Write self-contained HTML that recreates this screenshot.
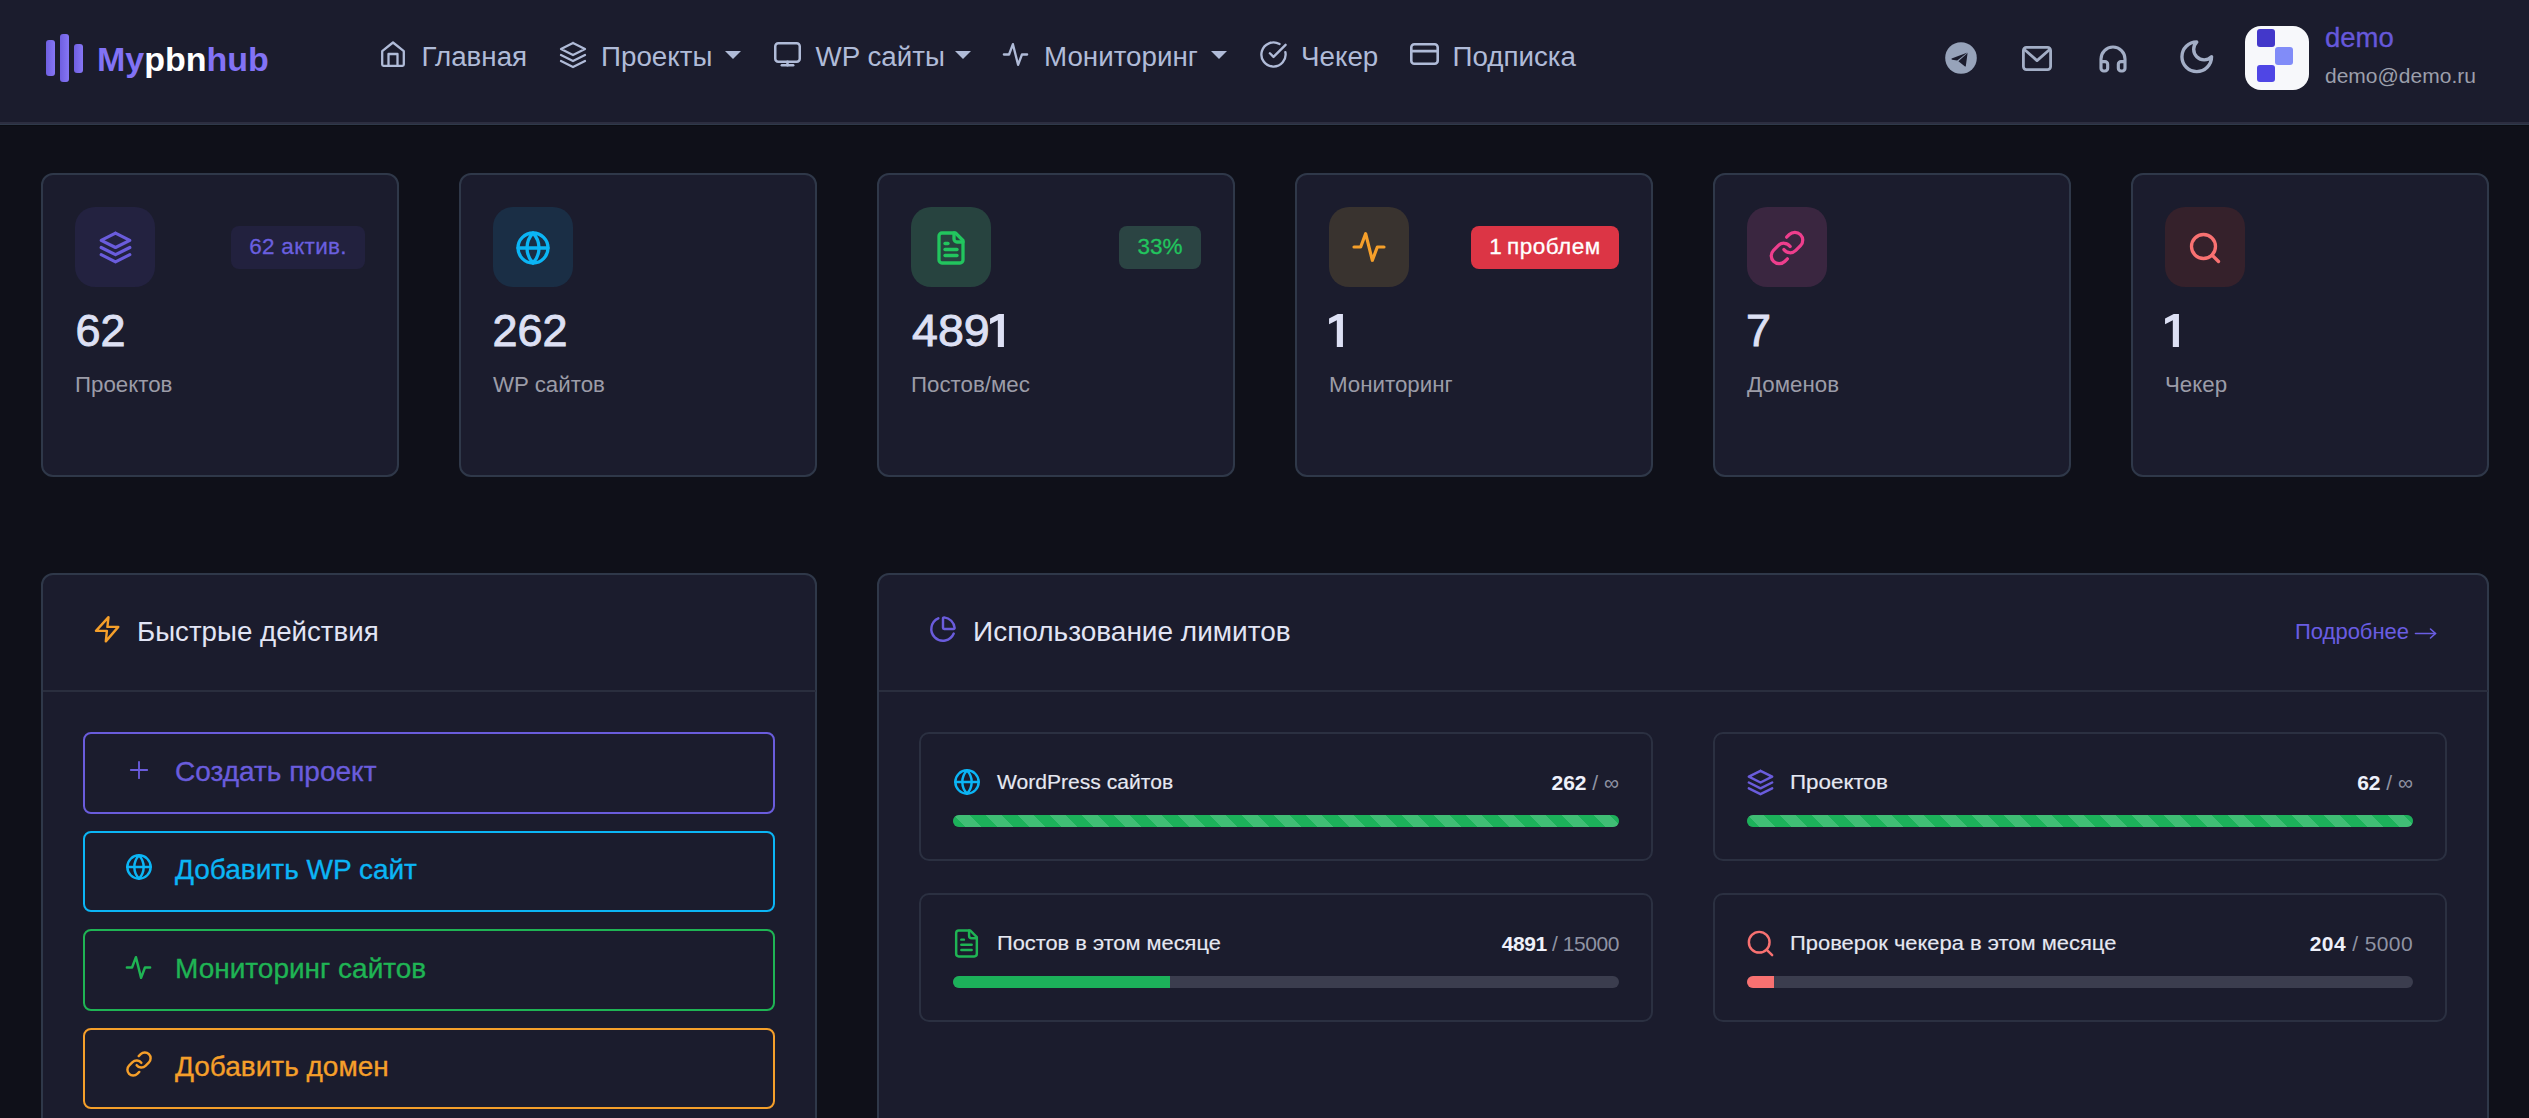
<!DOCTYPE html>
<html lang="ru">
<head>
<meta charset="utf-8">
<style>
*{box-sizing:border-box;margin:0;padding:0}
html,body{width:2529px;height:1118px;overflow:hidden}
body{background:#0f1019;font-family:"Liberation Sans",sans-serif;position:relative;color:#e0e4f5}
.abs{position:absolute}
.t{position:absolute;white-space:nowrap;line-height:1}
svg{position:absolute;overflow:visible}
.ic{fill:none;stroke-linecap:round;stroke-linejoin:round}
/* header */
#hdr{position:absolute;left:0;top:0;width:2529px;height:122px;background:#1b1c2d}
#hb1{position:absolute;left:0;top:122px;width:2529px;height:2px;background:#2c2e40}
#hb2{position:absolute;left:0;top:124px;width:2529px;height:1px;background:#2f394a}
#hb3{position:absolute;left:0;top:125px;width:2529px;height:1px;background:#0b0c12}
.nav{color:#b0bbd8;font-size:27.75px}
.nav-ic{stroke:#b0bbd8}
.caret{position:absolute;width:0;height:0;border-left:8px solid transparent;border-right:8px solid transparent;border-top:8px solid #b0bbd8}
/* cards */
.card{position:absolute;background:#1b1c2d;border:2px solid #2f3849;border-radius:12px}
.ibox{position:absolute;width:80px;height:80px;border-radius:20px}
.num{font-size:45px;font-weight:400;color:#dde0f4;-webkit-text-stroke:0.9px #dde0f4;transform-origin:left top}
.lbl{font-size:22.3px;color:#9c9ca8}
.badge{position:absolute;height:43px;border-radius:8px;font-size:22.5px;line-height:42px;text-align:center;-webkit-text-stroke:0.3px currentColor}
.btn{position:absolute;left:83px;width:692px;height:81.5px;border:2px solid;border-radius:8px}
.btxt{font-size:28px;-webkit-text-stroke:0.35px currentColor}
.lbox{position:absolute;width:734px;height:128.5px;border:2px solid #2b3041;border-radius:10px}
.ltxt{font-size:20px;color:#e6e8f2;-webkit-text-stroke:0.15px #e6e8f2;transform-origin:left top}
.lval{font-size:21px;color:#8f93a3;text-align:right}
.lval b{color:#eef0fa}
.bar{position:absolute;height:12px;border-radius:6px;background:#3b3d4e;overflow:hidden}
.fill{position:absolute;left:0;top:0;height:12px;background:#1cb15a}
.striped{background-color:#1cb15a;background-image:linear-gradient(45deg,rgba(255,255,255,.16) 25%,transparent 25%,transparent 50%,rgba(255,255,255,.16) 50%,rgba(255,255,255,.16) 75%,transparent 75%,transparent);background-size:32px 32px}
</style>
</head>
<body>
<!-- HEADER -->
<div id="hdr"></div><div id="hb1"></div><div id="hb2"></div><div id="hb3"></div>
<!-- logo -->
<div class="abs" style="left:45.5px;top:40px;width:9px;height:36px;border-radius:3px;background:linear-gradient(90deg,#6f5fe0,#8676f5)"></div>
<div class="abs" style="left:60px;top:34px;width:9px;height:48px;border-radius:3px;background:linear-gradient(90deg,#6f5fe0,#8676f5)"></div>
<div class="abs" style="left:74px;top:44px;width:9px;height:28.5px;border-radius:3px;background:linear-gradient(90deg,#6f5fe0,#8676f5)"></div>
<div class="t" style="left:97px;top:42.3px;font-size:34px;font-weight:700;color:#8272f5">My<span style="color:#fff">pbn</span>hub</div>

<!-- nav -->
<svg class="ic nav-ic" style="left:381px;top:41px" width="24" height="26" viewBox="0 0 24 26" stroke-width="2.3">
  <path d="M1.2 10.2 L12 1.5 L22.8 10.2 V23.6 a1.3 1.3 0 0 1 -1.3 1.3 H2.5 a1.3 1.3 0 0 1 -1.3 -1.3 Z"/>
  <path d="M7.5 24.9 V13 H16.5 V24.9"/>
</svg>
<div class="t nav" style="left:421.5px;top:42.7px">Главная</div>

<svg class="ic nav-ic" style="left:554.5px;top:37.3px" width="36" height="36" viewBox="0 0 24 24" stroke-width="1.5">
  <path d="M12 4l-8 4l8 4l8 -4l-8 -4"/><path d="M4 12l8 4l8 -4"/><path d="M4 16l8 4l8 -4"/>
</svg>
<div class="t nav" style="left:601px;top:42.7px">Проекты</div>
<div class="caret" style="left:725px;top:51px"></div>

<svg class="ic nav-ic" style="left:774px;top:41.8px" width="27" height="24.5" viewBox="0 0 27 24.5" stroke-width="2.5">
  <rect x="1.25" y="1.25" width="24.5" height="18.4" rx="3"/><path d="M13.5 19.7 V23.2"/><path d="M7.8 23.2 H19.2"/>
</svg>
<div class="t nav" style="left:815.5px;top:42.7px">WP сайты</div>
<div class="caret" style="left:955px;top:51px"></div>

<svg class="ic nav-ic" style="left:1000px;top:39px" width="31" height="31" viewBox="0 0 24 24" stroke-width="1.8">
  <path d="M3 12h4l3 -8l4 16l3 -8h4"/>
</svg>
<div class="t nav" style="left:1044px;top:42.7px">Мониторинг</div>
<div class="caret" style="left:1211px;top:51px"></div>

<svg class="ic nav-ic" style="left:1258.7px;top:39.7px" width="29" height="29" viewBox="0 0 24 24" stroke-width="1.95">
  <path d="M21.801 10A10 10 0 1 1 17 3.335"/><path d="m9 11 3 3L22 4"/>
</svg>
<div class="t nav" style="left:1301px;top:42.7px">Чекер</div>

<svg class="ic nav-ic" style="left:1410px;top:43.4px" width="29" height="22" viewBox="0 0 29 22" stroke-width="2.6">
  <rect x="1.3" y="1.3" width="26.4" height="19.4" rx="3"/><path d="M1.3 8.1 H27.7"/>
</svg>
<div class="t nav" style="left:1452.5px;top:42.7px">Подписка</div>

<!-- right header icons -->
<svg style="left:1945px;top:42px" width="32" height="32" viewBox="0 0 32 32">
  <circle cx="16" cy="16" r="15.8" fill="#97a3ba"/>
  <path d="M6.6 16.6 Q6.1 17.3 7.2 17.7 L12.2 18.4 L21.9 11.0 L22.6 10.4 Z" fill="#1b1c2d"/>
  <path d="M22.6 10.9 L20.8 24.3 Q20.5 24.8 20.0 24.4 L13.4 19.3 Z" fill="#1b1c2d"/>
</svg>
<svg class="ic" style="left:2022px;top:46px" width="30" height="25" viewBox="0 0 30 25" stroke="#a3aec6" stroke-width="2.8">
  <rect x="1.4" y="1.4" width="27.2" height="22.2" rx="3"/><path d="M3.2 4.2 L15 14.6 L26.8 4.2"/>
</svg>
<svg class="ic" style="left:2097px;top:43px" width="32" height="32" viewBox="0 0 24 24" stroke="#a3aec6" stroke-width="2.35">
  <path d="M3 14h3a2 2 0 0 1 2 2v3a2 2 0 0 1-2 2H5a2 2 0 0 1-2-2v-7a9 9 0 0 1 18 0v7a2 2 0 0 1-2 2h-1a2 2 0 0 1-2-2v-3a2 2 0 0 1 2-2h3"/>
</svg>
<svg class="ic" style="left:2177.4px;top:37.3px" width="39.5" height="39.5" viewBox="0 0 24 24" stroke="#a3aec6" stroke-width="2.05">
  <path d="M12 3a6 6 0 0 0 9 9 9 9 0 1 1-9-9Z"/>
</svg>
<div class="abs" style="left:2245px;top:26px;width:64px;height:64px;border-radius:16px;background:#f7f8fb"></div>
<div class="abs" style="left:2257px;top:29px;width:18px;height:18px;border-radius:3px;background:#4338ca"></div>
<div class="abs" style="left:2275px;top:47px;width:18px;height:18px;border-radius:3px;background:#818cf8"></div>
<div class="abs" style="left:2257px;top:64.6px;width:18px;height:17.5px;border-radius:3px;background:#4f46e5"></div>
<div class="t" style="left:2325px;top:23.5px;font-size:27.5px;color:#6658da;-webkit-text-stroke:0.35px #6658da">demo</div>
<div class="t" style="left:2325px;top:65px;font-size:21px;color:#9c9fab">demo@demo.ru</div>


<!-- STAT CARDS -->
<div class="card" style="left:41px;top:173px;width:358px;height:304px"></div>
<div class="ibox" style="left:75px;top:207px;background:#232240"></div>
<svg class="ic" style="left:93.5px;top:226px" width="43" height="43" viewBox="0 0 24 24" stroke="#6a5cdc" stroke-width="1.75"><path d="M12 4l-8 4l8 4l8 -4l-8 -4"/><path d="M4 12l8 4l8 -4"/><path d="M4 16l8 4l8 -4"/></svg>
<div class="t num" style="left:75.5px;top:308px">62</div>
<div class="t lbl" style="left:75px;top:374.3px">Проектов</div>
<div class="badge" style="left:231px;top:226px;width:134px;background:#22213e;color:#6a5fdf;letter-spacing:0.3px">62 актив.</div>
<div class="card" style="left:459px;top:173px;width:358px;height:304px"></div>
<div class="ibox" style="left:493px;top:207px;background:#1a2e45"></div>
<svg class="ic" style="left:515px;top:230px" width="36" height="36" viewBox="0 0 24 24" stroke="#0bb5f5" stroke-width="2.2"><circle cx="12" cy="12" r="10"/><path d="M12 2a14.5 14.5 0 0 0 0 20a14.5 14.5 0 0 0 0 -20"/><path d="M2 12h20"/></svg>
<div class="t num" style="left:492.5px;top:308px">262</div>
<div class="t lbl" style="left:493px;top:374.3px">WP сайтов</div>
<div class="card" style="left:877px;top:173px;width:358px;height:304px"></div>
<div class="ibox" style="left:911px;top:207px;background:#27433f"></div>
<svg class="ic" style="left:933px;top:229.5px" width="36" height="36" viewBox="0 0 24 24" stroke="#22c55e" stroke-width="2.2"><path d="M15 2H6a2 2 0 0 0-2 2v16a2 2 0 0 0 2 2h12a2 2 0 0 0 2-2V7Z"/><path d="M14 2v4a2 2 0 0 0 2 2h4"/><path d="M10 9H8"/><path d="M16 13H8"/><path d="M16 17H8"/></svg>
<div class="t num" style="left:911.5px;top:308px;transform:scaleX(1.035)">489</div>
<svg style="left:990.2px;top:314.3px" width="14" height="33" viewBox="0 0 13.6 32.3"><path d="M0 4.5 L8.5 0 H13.6 V32.3 H7.6 V6.1 L0 10.1 Z" fill="#dde0f4"/></svg>
<div class="t lbl" style="left:911px;top:374.3px">Постов/мес</div>
<div class="badge" style="left:1119px;top:226px;width:82px;background:#2b4443;color:#22c55e">33%</div>
<div class="card" style="left:1295px;top:173px;width:358px;height:304px"></div>
<div class="ibox" style="left:1329px;top:207px;background:#39332f"></div>
<svg class="ic" style="left:1349px;top:227px" width="40" height="40" viewBox="0 0 24 24" stroke="#f59f2a" stroke-width="1.9"><path d="M3 12h4l3 -8l4 16l3 -8h4"/></svg>
<svg style="left:1329.2px;top:314.3px" width="14" height="33" viewBox="0 0 13.6 32.3"><path d="M0 4.5 L8.5 0 H13.6 V32.3 H7.6 V6.1 L0 10.1 Z" fill="#dde0f4"/></svg>
<div class="t lbl" style="left:1329px;top:374.3px">Мониторинг</div>
<div class="badge" style="left:1471px;top:226px;width:148px;background:#dc3545;color:#ffffff;word-spacing:-2px;letter-spacing:0.5px">1 проблем</div>
<div class="card" style="left:1713px;top:173px;width:358px;height:304px"></div>
<div class="ibox" style="left:1747px;top:207px;background:#3a2640"></div>
<svg class="ic" style="left:1768px;top:229px" width="38" height="38" viewBox="0 0 24 24" stroke="#ee3e8d" stroke-width="2.05"><path d="M10 13a5 5 0 0 0 7.54.54l3-3a5 5 0 0 0-7.07-7.07l-1.72 1.71"/><path d="M14 11a5 5 0 0 0-7.54-.54l-3 3a5 5 0 0 0 7.07 7.07l1.71-1.71"/></svg>
<div class="t num" style="left:1746px;top:308px">7</div>
<div class="t lbl" style="left:1747px;top:374.3px">Доменов</div>
<div class="card" style="left:2131px;top:173px;width:358px;height:304px"></div>
<div class="ibox" style="left:2165px;top:207px;background:#35212b"></div>
<svg class="ic" style="left:2187px;top:230px" width="36" height="36" viewBox="0 0 24 24" stroke="#f87171" stroke-width="2.2"><circle cx="11" cy="11" r="8"/><path d="m21 21-4.3-4.3"/></svg>
<svg style="left:2165.2px;top:314.3px" width="14" height="33" viewBox="0 0 13.6 32.3"><path d="M0 4.5 L8.5 0 H13.6 V32.3 H7.6 V6.1 L0 10.1 Z" fill="#dde0f4"/></svg>
<div class="t lbl" style="left:2165px;top:374.3px">Чекер</div>

<!-- QUICK ACTIONS -->
<div class="card" style="left:41px;top:573px;width:776px;height:600px"></div>
<div class="abs" style="left:42.5px;top:689.5px;width:773px;height:2px;background:#2a2e3e"></div>
<svg class="ic" style="left:85px;top:605px" width="40" height="40" viewBox="0 0 40 40" stroke="#f59f2a" stroke-width="2.4"><path d="M23.5 12.1 L11 25.9 H21.9 L20.8 36.4 L33.3 21.9 H22.4 Z"/></svg>
<div class="t" style="left:137px;top:618px;font-size:27.7px;color:#e2e5f5">Быстрые действия</div>

<div class="btn" style="top:732px;border-color:#6a5cdc"></div>
<svg class="ic" style="left:125px;top:756px" width="28" height="28" viewBox="0 0 24 24" stroke="#6a5cdc" stroke-width="1.6"><path d="M5 12h14"/><path d="M12 5v14"/></svg>
<div class="t btxt" style="left:175px;top:758px;color:#6a5cdc">Создать проект</div>

<div class="btn" style="top:830.5px;border-color:#0bb5f5"></div>
<svg class="ic" style="left:124.8px;top:853px" width="28" height="28" viewBox="0 0 24 24" stroke="#0bb5f5" stroke-width="2.1"><circle cx="12" cy="12" r="10"/><path d="M12 2a14.5 14.5 0 0 0 0 20a14.5 14.5 0 0 0 0 -20"/><path d="M2 12h20"/></svg>
<div class="t btxt" style="left:175px;top:856px;color:#0bb5f5">Добавить WP сайт</div>

<div class="btn" style="top:929px;border-color:#1fb454"></div>
<svg class="ic" style="left:123px;top:952px" width="31" height="31" viewBox="0 0 24 24" stroke="#1fb454" stroke-width="1.9"><path d="M3 12h4l3 -8l4 16l3 -8h4"/></svg>
<div class="t btxt" style="left:175px;top:955px;color:#1fb454">Мониторинг сайтов</div>

<div class="btn" style="top:1027.5px;border-color:#f59f2a"></div>
<svg class="ic" style="left:125px;top:1050px" width="28" height="28" viewBox="0 0 24 24" stroke="#f59f2a" stroke-width="2.1"><path d="M10 13a5 5 0 0 0 7.54.54l3-3a5 5 0 0 0-7.07-7.07l-1.72 1.71"/><path d="M14 11a5 5 0 0 0-7.54-.54l-3 3a5 5 0 0 0 7.07 7.07l1.71-1.71"/></svg>
<div class="t btxt" style="left:175px;top:1053px;color:#f59f2a">Добавить домен</div>

<!-- LIMITS -->
<div class="card" style="left:877px;top:573px;width:1612px;height:600px"></div>
<div class="abs" style="left:878.5px;top:689.5px;width:1609px;height:2px;background:#2a2e3e"></div>
<svg class="ic" style="left:929px;top:615.4px" width="28" height="28" viewBox="0 0 24 24" stroke="#6a5cdc" stroke-width="2.1"><path d="M21 12c.552 0 1.005-.449.95-.998a10 10 0 0 0-8.953-8.951c-.55-.055-.998.398-.998.95v8a1 1 0 0 0 1 1z"/><path d="M21.21 15.89A10 10 0 1 1 8 2.83"/></svg>
<div class="t" style="left:973px;top:618px;font-size:28px;color:#e2e5f5">Использование лимитов</div>
<div class="t" style="left:2295px;top:621px;font-size:22px;color:#6a5de3">Подробнее</div>
<svg class="ic" style="left:2414px;top:627px" width="24" height="13" viewBox="0 0 24 13" stroke="#6a5de3" stroke-width="1.6"><path d="M1.5 6.5 H21.5"/><path d="M16.5 2 L21.5 6.5 L16.5 11"/></svg>

<div class="lbox" style="left:919px;top:732px"></div>
<svg class="ic" style="left:952.7px;top:768.2px" width="28" height="28" viewBox="0 0 24 24" stroke="#0bb5f5" stroke-width="2.1"><circle cx="12" cy="12" r="10"/><path d="M12 2a14.5 14.5 0 0 0 0 20a14.5 14.5 0 0 0 0 -20"/><path d="M2 12h20"/></svg>
<div class="t ltxt" style="left:997px;top:772px;transform:scaleX(1.054)">WordPress сайтов</div>
<div class="t lval" style="right:910px;top:772px"><b>262</b> / ∞</div>
<div class="bar" style="left:953px;top:815px;width:666px"><div class="fill striped" style="width:666px"></div></div>

<div class="lbox" style="left:1713px;top:732px"></div>
<svg class="ic" style="left:1743px;top:765px" width="35" height="35" viewBox="0 0 24 24" stroke="#6a5cdc" stroke-width="1.7"><path d="M12 4l-8 4l8 4l8 -4l-8 -4"/><path d="M4 12l8 4l8 -4"/><path d="M4 16l8 4l8 -4"/></svg>
<div class="t ltxt" style="left:1790px;top:772px;transform:scaleX(1.12)">Проектов</div>
<div class="t lval" style="right:116px;top:772px"><b>62</b> / ∞</div>
<div class="bar" style="left:1747px;top:815px;width:666px"><div class="fill striped" style="width:666px"></div></div>

<div class="lbox" style="left:919px;top:893px"></div>
<svg class="ic" style="left:951px;top:928px" width="31" height="31" viewBox="0 0 24 24" stroke="#1fb454" stroke-width="1.9"><path d="M15 2H6a2 2 0 0 0-2 2v16a2 2 0 0 0 2 2h12a2 2 0 0 0 2-2V7Z"/><path d="M14 2v4a2 2 0 0 0 2 2h4"/><path d="M10 9H8"/><path d="M16 13H8"/><path d="M16 17H8"/></svg>
<div class="t ltxt" style="left:997px;top:933px;transform:scaleX(1.091)">Постов в этом месяце</div>
<div class="t lval" style="right:910px;top:933px;letter-spacing:-0.45px"><b>4891</b> / 15000</div>
<div class="bar" style="left:953px;top:976px;width:666px"><div class="fill" style="width:217px"></div></div>

<div class="lbox" style="left:1713px;top:893px"></div>
<svg class="ic" style="left:1745px;top:928px" width="31" height="31" viewBox="0 0 24 24" stroke="#f87171" stroke-width="1.9"><circle cx="11" cy="11" r="8"/><path d="m21 21-4.3-4.3"/></svg>
<div class="t ltxt" style="left:1790px;top:933px;transform:scaleX(1.097)">Проверок чекера в этом месяце</div>
<div class="t lval" style="right:116px;top:933px;letter-spacing:0.4px"><b>204</b> / 5000</div>
<div class="bar" style="left:1747px;top:976px;width:666px"><div class="fill" style="width:27px;background:#f87171"></div></div>
</body>
</html>
